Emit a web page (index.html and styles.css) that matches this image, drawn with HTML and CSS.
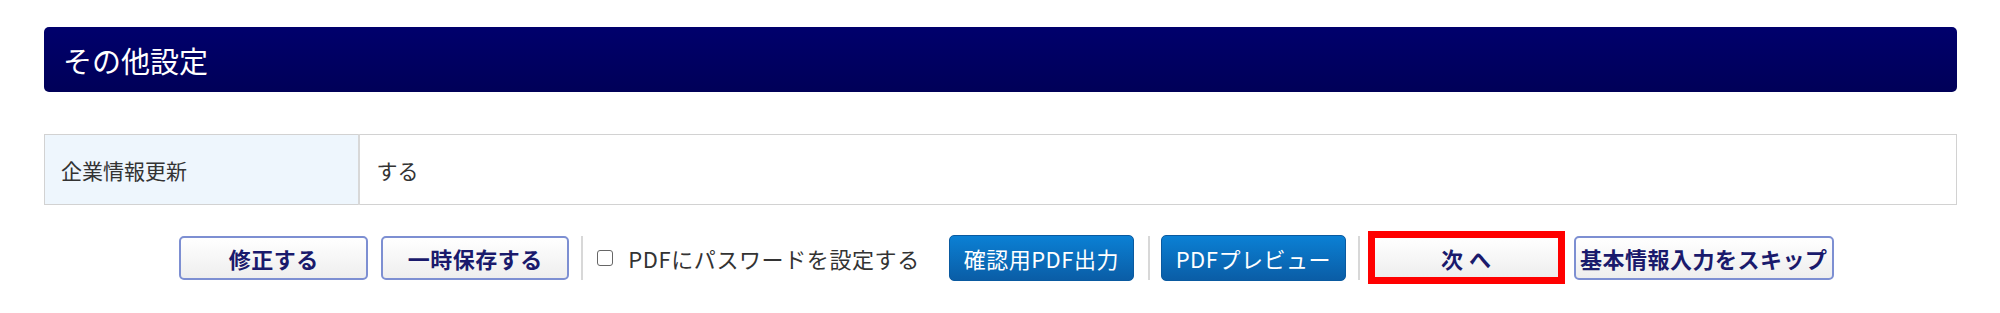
FILE: index.html
```html
<!DOCTYPE html>
<html lang="ja">
<head>
<meta charset="utf-8">
<title>その他設定</title>
<link rel="stylesheet" href="styles.css">
</head>
<body>
<div class="page">
  <h2 class="section-title">その他設定</h2>
  <table class="info-table">
    <tr>
      <th>企業情報更新</th>
      <td>する</td>
    </tr>
  </table>
  <div class="actions">
    <button class="btn btn-light btn-fix">修正する</button>
    <button class="btn btn-light btn-save">一時保存する</button>
    <span class="sep sep-a"></span>
    <label class="check">
      <input type="checkbox" class="check-box">
      <span class="check-text">PDFにパスワードを設定する</span>
    </label>
    <button class="btn btn-blue btn-pdf">確認用PDF出力</button>
    <span class="sep sep-b"></span>
    <button class="btn btn-blue btn-preview">PDFプレビュー</button>
    <span class="sep sep-c"></span>
    <button class="btn btn-light btn-next">次 へ</button>
    <button class="btn btn-light btn-skip">基本情報入力をスキップ</button>
  </div>
</div>
</body>
</html>
```

FILE: styles.css
```css
* { box-sizing: border-box; }
html, body { margin: 0; padding: 0; background: #ffffff; }
body {
  font-family: "Noto Sans CJK JP", "Noto Sans", sans-serif;
  color: #333333;
}
.page {
  padding: 27px 43px 0 44px;
}
.section-title {
  margin: 0;
  height: 65px;
  display: flex;
  align-items: center;
  padding-left: 19px;
  font-size: 29px;
  font-weight: normal;
  color: #ffffff;
  border-radius: 5px;
  background: linear-gradient(#00006c, #000058);
}
.info-table {
  margin-top: 42px;
  width: 100%;
  border-collapse: collapse;
  font-size: 21px;
}
.info-table th,
.info-table td {
  height: 70px;
  border: 1px solid #d2d2d2;
  text-align: left;
  font-weight: normal;
  padding: 0 0 0 16px;
}
.info-table th {
  width: 314px;
  background: #eef6fd;
  border-right: 2px solid #d8d8d8;
}
.info-table td { padding-left: 17px; }
.actions {
  margin-top: 26px;
  padding-left: 12px;
  height: 53px;
  display: flex;
  align-items: center;
  justify-content: center;
}
.btn {
  font-family: inherit;
  font-size: 22px;
  letter-spacing: 0.5px;
  cursor: pointer;
  padding: 0;
  display: flex;
  align-items: center;
  justify-content: center;
  line-height: 1;
}
.btn-light {
  height: 44px;
  font-weight: bold;
  color: #1a1a6c;
  border: 2px solid #7d8fd2;
  border-radius: 5px;
  background: linear-gradient(#ffffff, #eeeeee);
}
.btn-blue {
  height: 46px;
  width: 185px;
  color: #ffffff;
  border: 1px solid #0a5aa0;
  border-radius: 5px;
  background: linear-gradient(#0b80d4, #0a5da6);
}
.btn-fix { width: 189px; }
.btn-save { width: 188px; margin-left: 13px; }
.sep {
  width: 2px;
  height: 44px;
  background: #d8d8d8;
}
.sep-a { margin-left: 12px; }
.check {
  display: flex;
  align-items: center;
  margin-left: 14px;
  font-size: 22px;
  letter-spacing: 0.6px;
  color: #333333;
}
.check-box {
  appearance: none;
  -webkit-appearance: none;
  margin: 0;
  width: 16px;
  height: 16px;
  border: 1.5px solid #666666;
  border-radius: 3px;
  background: #ffffff;
}
.check-text { margin-left: 15px; }
.btn-pdf { margin-left: 29px; }
.sep-b { margin-left: 14px; }
.btn-preview { margin-left: 11px; }
.sep-c { margin-left: 12px; }
.btn-next {
  width: 197px;
  height: 53px;
  margin-left: 8px;
  border: 7px solid #ff0000;
  border-radius: 0;
}
.btn-skip { width: 260px; margin-left: 9px; }
```
